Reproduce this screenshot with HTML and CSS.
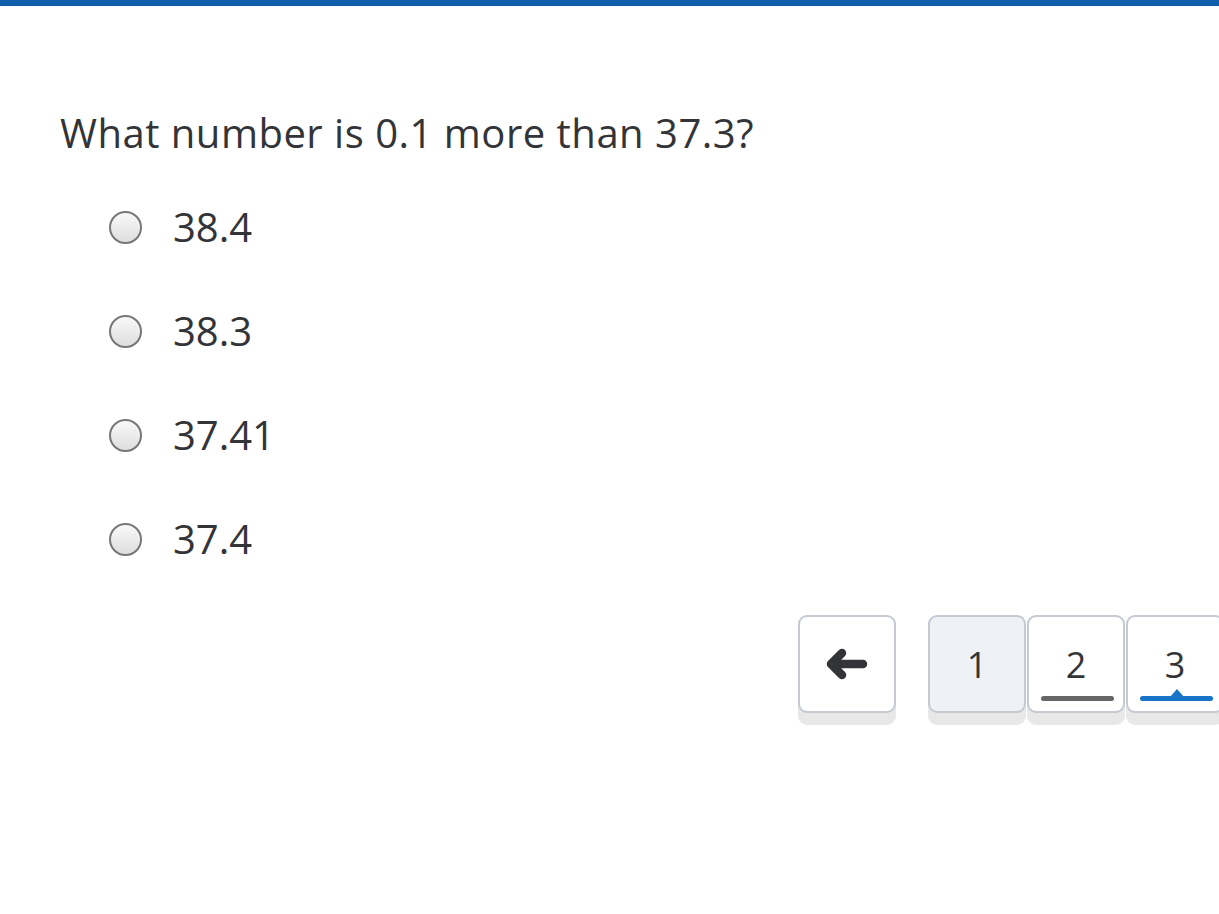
FILE: index.html
```html
<!DOCTYPE html>
<html lang="en">
<head>
<meta charset="utf-8">
<title>Quiz</title>
<link rel="stylesheet" href="styles.css">
</head>
<body>
<div class="topbar"></div>
<main class="content">
  <h1 class="question">What number is 0.1 more than 37.3?</h1>
  <ul class="options">
    <li class="option"><span class="radio"></span><span class="label">38.4</span></li>
    <li class="option"><span class="radio"></span><span class="label">38.3</span></li>
    <li class="option"><span class="radio"></span><span class="label">37.41</span></li>
    <li class="option"><span class="radio"></span><span class="label">37.4</span></li>
  </ul>
  <nav class="pager">
    <button class="pbtn back" aria-label="Back">
      <svg width="42" height="34" viewBox="0 0 42 34">
        <path d="M5 17 H37 M5 17 L16 6 M5 17 L16 28" fill="none" stroke="#333438" stroke-width="8.5" stroke-linecap="round" stroke-linejoin="round"/>
      </svg>
    </button>
    <div class="pages">
      <button class="pbtn page done">1</button>
      <button class="pbtn page seen">2<span class="bar"></span></button>
      <button class="pbtn page current">3<span class="bar"></span></button>
    </div>
  </nav>
</main>
</body>
</html>
```
FILE: styles.css
```css
html, body {
  margin: 0;
  padding: 0;
  overflow: hidden;
  background: #ffffff;
}
body {
  font-family: "Open Sans", "Noto Sans", sans-serif;
  color: #333438;
  width: 1219px;
  height: 914px;
}
.topbar {
  height: 6px;
  background: #0f5ead;
}
.content {
  padding: 0 0 0 60px;
}
.question {
  margin: 99px 0 0 0;
  font-size: 40px;
  font-weight: 400;
  line-height: 56px;
  letter-spacing: 0.5px;
}
.options {
  list-style: none;
  margin: 14px 0 0 0;
  padding: 0 0 0 49px;
}
.option {
  display: flex;
  align-items: center;
  height: 104px;
  gap: 31px;
}
.radio {
  width: 29px;
  height: 29px;
  border-radius: 50%;
  border: 2px solid #777777;
  background: linear-gradient(#f9f9f9, #dedede);
  flex: none;
}
.label {
  font-size: 40px;
  line-height: 48px;
}
.pager {
  display: flex;
  margin: 24px 0 0 738px;
  gap: 32px;
}
.pages {
  display: flex;
  gap: 1px;
}
.pbtn {
  position: relative;
  width: 98px;
  height: 98px;
  box-sizing: border-box;
  border: 2px solid #c4c9d2;
  border-radius: 9px;
  background: #ffffff;
  box-shadow: 0 12px 0 #e8e8e8;
  font-family: "Open Sans", "Noto Sans", sans-serif;
  font-size: 36px;
  color: #333438;
  display: flex;
  align-items: center;
  justify-content: center;
  padding: 0;
  flex: none;
}
.page.done {
  background: #eef2f6;
}
.bar {
  position: absolute;
  left: 12px;
  right: 9px;
  bottom: 10px;
  height: 5px;
  border-radius: 3px;
  background: #666666;
}
.current .bar {
  background: #1874c6;
}
.current .bar::after {
  content: "";
  position: absolute;
  left: 50%;
  top: -7px;
  margin-left: -7px;
  border-left: 7px solid transparent;
  border-right: 7px solid transparent;
  border-bottom: 8px solid #1874c6;
}
```
